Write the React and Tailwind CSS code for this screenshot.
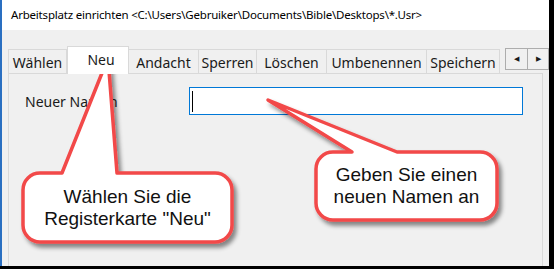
const tabs = [
  { label: "Wählen", w: 59 },
  { label: "Neu", w: 62, active: true },
  { label: "Andacht", w: 70 },
  { label: "Sperren", w: 58 },
  { label: "Löschen", w: 70 },
  { label: "Umbenennen", w: 100 },
  { label: "Speichern", w: 73 },
];

function calloutPath(x0, y0, x1, y1, r, a, b, tx, ty) {
  return [
    `M ${x0 + r} ${y0}`,
    `L ${a} ${y0}`,
    `L ${tx} ${ty}`,
    `L ${b} ${y0}`,
    `L ${x1 - r} ${y0}`,
    `A ${r} ${r} 0 0 1 ${x1} ${y0 + r}`,
    `L ${x1} ${y1 - r}`,
    `A ${r} ${r} 0 0 1 ${x1 - r} ${y1}`,
    `L ${x0 + r} ${y1}`,
    `A ${r} ${r} 0 0 1 ${x0} ${y1 - r}`,
    `L ${x0} ${y0 + r}`,
    `A ${r} ${r} 0 0 1 ${x0 + r} ${y0}`,
    "Z",
  ].join(" ");
}

function Callouts() {
  return (
    <svg className="absolute left-0 top-0" width="554" height="269">
      <defs>
        <filter id="shadow" x="-20%" y="-20%" width="140%" height="140%">
          <feDropShadow dx="3" dy="4" stdDeviation="2" floodColor="#000" floodOpacity="0.45" />
        </filter>
      </defs>
      <path
        d={calloutPath(23, 173, 232, 242, 17, 62, 117, 108, 58)}
        fill="#fff"
        stroke="#f24848"
        strokeWidth="3.5"
        strokeLinejoin="round"
        filter="url(#shadow)"
      />
      <path
        d={calloutPath(316, 152, 497, 220, 17, 352, 397, 268, 100)}
        fill="#fff"
        stroke="#f24848"
        strokeWidth="3.5"
        strokeLinejoin="round"
        filter="url(#shadow)"
      />
    </svg>
  );
}

export default function App() {
  return (
    <div className="relative h-[269px] w-[554px] overflow-hidden bg-black font-['Noto_Sans',sans-serif] text-[#1a1a1a]">
      <div className="flex h-[266px] w-[549px] flex-col border-l-2 border-[#2a6fc1] bg-[#f0f0f0]">
        <div className="flex h-[30px] shrink-0 items-center bg-white pl-[9px] text-[11.5px] tracking-[-0.2px] text-black">
          Arbeitsplatz einrichten &lt;C:\Users\Gebruiker\Documents\Bible\Desktops\*.Usr&gt;
        </div>

        <div className="flex h-[43px] shrink-0 items-end pl-[6px] pt-[15px]">
          {tabs.map((t) =>
            t.active ? (
              <div
                key={t.label}
                style={{ width: t.w }}
                className="relative z-10 -mb-px flex h-[28px] items-start justify-center border-x border-t border-[#d9d9d9] bg-white pl-[6px] pt-[2px] text-[14px]"
              >
                {t.label}
              </div>
            ) : (
              <div
                key={t.label}
                style={{ width: t.w }}
                className="flex h-[24px] items-center justify-center border-r border-t border-[#d9d9d9] bg-[#f0f0f0] pt-[1px] text-[14px] first:border-l"
              >
                {t.label}
              </div>
            )
          )}
          <div className="mb-[3px] ml-[5px] flex h-[22px]">
            <div className="flex w-[23px] items-center justify-center border border-[#adadad] bg-[#f0f0f0] text-[7px]">◀</div>
            <div className="flex w-[21px] items-center justify-center border-y border-r border-[#adadad] bg-[#f0f0f0] text-[7px]">▶</div>
          </div>
        </div>

        <div className="mx-[6px] flex-1 border-x border-t border-[#d9d9d9] bg-[#f0f0f0]">
          <div className="flex items-center pt-[13px]">
            <div className="w-[180px] pl-[16px] text-[14px]">Neuer Namen</div>
            <div className="flex h-[28px] w-[334px] items-center border border-[#0078d7] bg-white pl-[2px]">
              <div className="h-[21px] w-px bg-black" />
            </div>
          </div>
        </div>
      </div>

      <Callouts />

      <div className="absolute left-[23px] top-[173px] flex h-[69px] w-[209px] flex-col items-center justify-center font-['Liberation_Sans',Arial,sans-serif] text-[19px] leading-[22px] text-[#111]">
        <div>Wählen Sie die</div>
        <div>Registerkarte "Neu"</div>
      </div>
      <div className="absolute left-[316px] top-[152px] flex h-[68px] w-[181px] flex-col items-center justify-center font-['Liberation_Sans',Arial,sans-serif] text-[19px] leading-[22px] text-[#111]">
        <div>Geben Sie einen</div>
        <div>neuen Namen an</div>
      </div>
    </div>
  );
}
